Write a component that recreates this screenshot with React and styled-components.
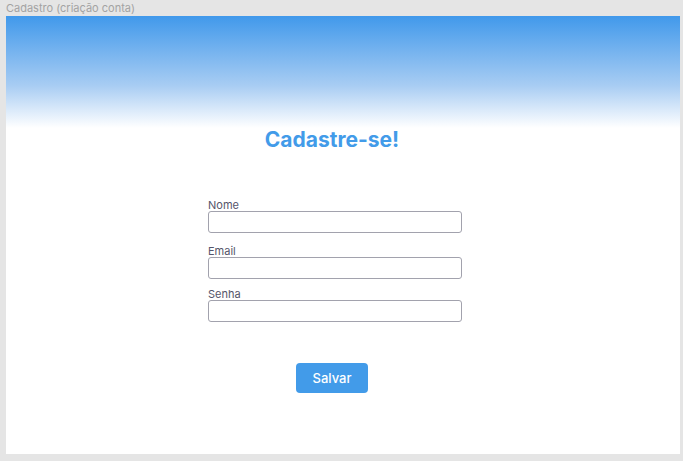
import styled, { createGlobalStyle } from "styled-components";

const GlobalStyle = createGlobalStyle`
  html, body {
    margin: 0;
    padding: 0;
    background: #e5e5e5;
    font-family: Inter, "Noto Sans", sans-serif;
  }
`;

const Canvas = styled.div`
  width: 683px;
  height: 461px;
  background: #e5e5e5;
  padding: 0 3px 0 6px;
  box-sizing: border-box;
`;

const FrameName = styled.div`
  height: 16px;
  font-size: 11px;
  line-height: 16px;
  color: #a3a3a3;
`;

const Frame = styled.div`
  height: 438px;
  padding-right: 22px;
  background: linear-gradient(
    to bottom,
    #4199eb 0px,
    #a9cdf3 70px,
    #ffffff 112px
  );
  display: flex;
  flex-direction: column;
  align-items: center;
`;

const Title = styled.h1`
  margin: 111px 0 0;
  font-size: 21px;
  line-height: 26px;
  font-weight: 700;
  color: #429be9;
`;

const Form = styled.form`
  width: 254px;
  margin: 46px 0 0 6px;
  display: flex;
  flex-direction: column;
`;

const Field = styled.div`
  display: flex;
  flex-direction: column;
  margin-top: ${(p) => p.$gap}px;
`;

const Label = styled.label`
  font-size: 11px;
  line-height: 12px;
  color: #55556a;
`;

const Input = styled.input`
  box-sizing: border-box;
  width: 254px;
  height: 22px;
  border: 1px solid #a2a2ad;
  border-radius: 3px;
  background: #fff;
  outline: none;
`;

const SaveButton = styled.button`
  margin-top: 41px;
  width: 72px;
  height: 30px;
  border: none;
  border-radius: 4px;
  background: #429be9;
  color: #fff;
  font-family: Inter, "Noto Sans", sans-serif;
  font-size: 13px;
  font-weight: 500;
  cursor: pointer;
`;

export default function App() {
  return (
    <Canvas>
      <GlobalStyle />
      <FrameName>Cadastro (criação conta)</FrameName>
      <Frame>
        <Title>Cadastre-se!</Title>
        <Form onSubmit={(e) => e.preventDefault()}>
          <Field $gap={0}>
            <Label>Nome</Label>
            <Input type="text" />
          </Field>
          <Field $gap={12}>
            <Label>Email</Label>
            <Input type="email" />
          </Field>
          <Field $gap={9}>
            <Label>Senha</Label>
            <Input type="password" />
          </Field>
        </Form>
        <SaveButton type="button">Salvar</SaveButton>
      </Frame>
    </Canvas>
  );
}
